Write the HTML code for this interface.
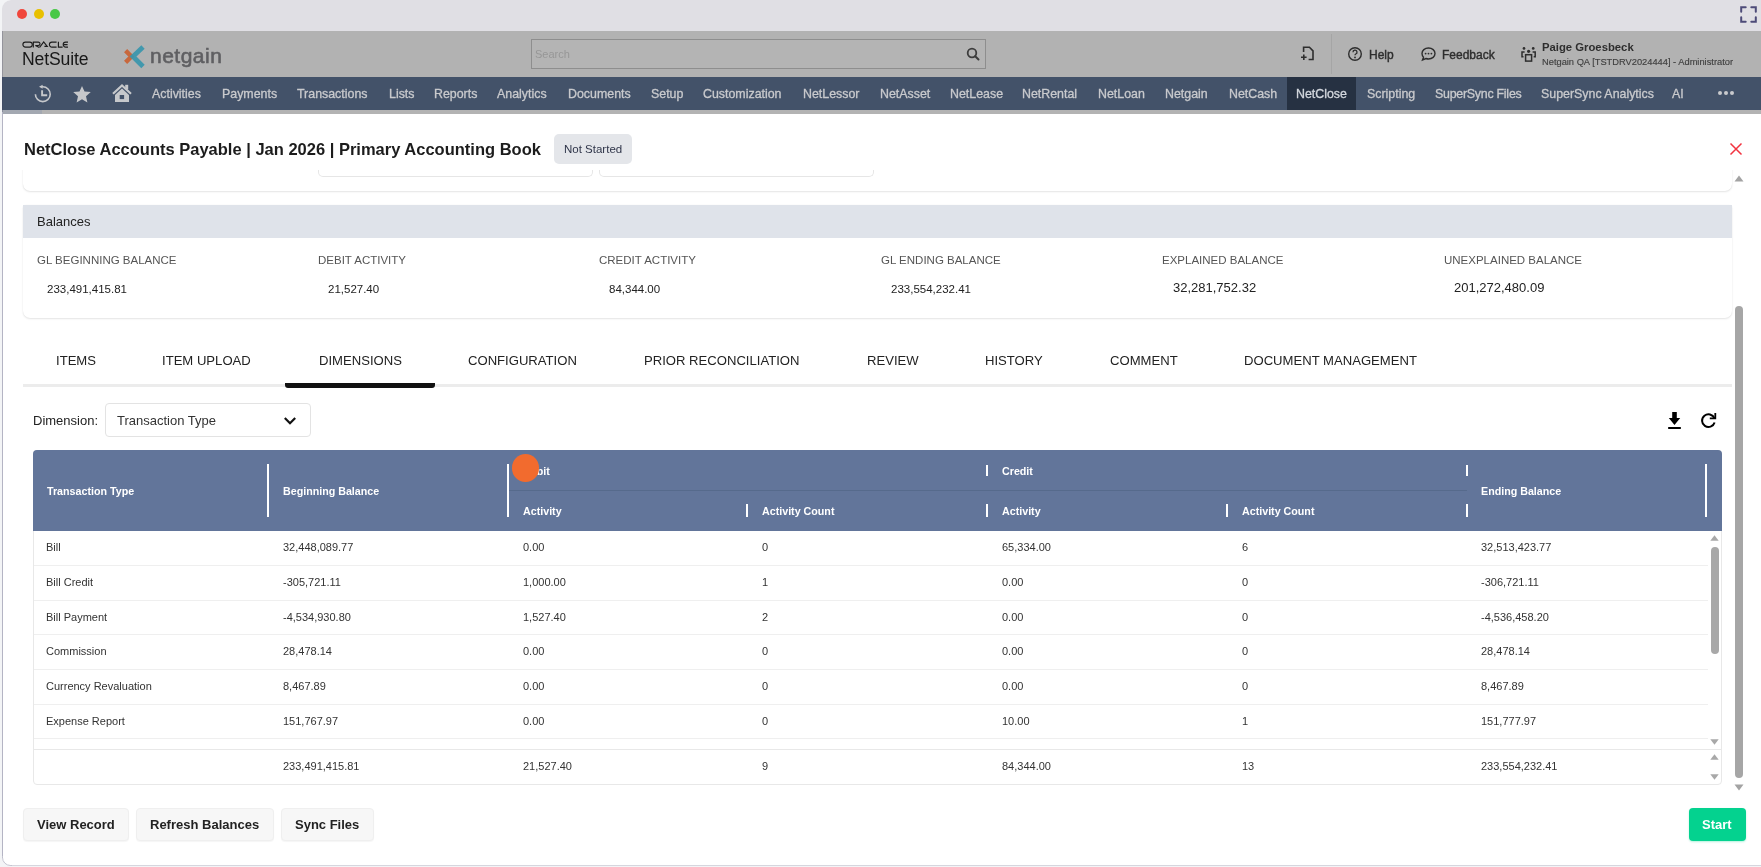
<!DOCTYPE html>
<html><head><meta charset="utf-8">
<style>
*{margin:0;padding:0;box-sizing:border-box}
html,body{width:1761px;height:867px;overflow:hidden;background:#f3f4f6;font-family:"Liberation Sans",sans-serif}
.a{position:absolute}
.t{position:absolute;line-height:1;white-space:nowrap;will-change:transform}
#win{position:absolute;left:0;top:0;width:1761px;height:867px;background:#fff;clip-path:inset(0 0 1px 2px round 9px 0 0 9px)}
#titlebar{position:absolute;left:0;top:0;width:1761px;height:31px;background:#e0dfe4}
.dot{position:absolute;top:9px;width:10px;height:10px;border-radius:50%}
#hdr{position:absolute;left:0;top:31px;width:1761px;height:46px;background:#b2b2b2}
#nav{position:absolute;left:0;top:77px;width:1761px;height:33px;background:#435269}
.nv{position:absolute;will-change:transform;top:87.9px;font-size:12.4px;color:#c9cacd;-webkit-text-stroke:0.3px #c9cacd;line-height:1}
#strip{position:absolute;left:0;top:110px;width:1761px;height:4px;background:#b3b3b3}
#modal{position:absolute;left:3px;top:114px;width:1758px;height:752px;background:#fff;border-radius:7px 0 0 8px}
.lbl{font-size:11.5px;color:#555}
.val{font-size:11.5px;color:#222}
.tab{font-size:13.1px;color:#222}
.th{font-size:10.7px;font-weight:bold;color:#fff}
.td{font-size:11px;color:#333}
.sep{position:absolute;width:2px;background:#fff}
.rl{position:absolute;left:34px;width:1674px;height:1px;background:#efefef}
.btn{position:absolute;top:808px;height:33px;background:#f7f7f7;border:1px solid #efefef;border-radius:4px;box-shadow:0 1px 1px rgba(0,0,0,0.04)}
.bt{font-size:13px;font-weight:bold;color:#222}
</style></head><body>
<div id="win">
<div id="titlebar"></div>
<div class="dot" style="left:17px;background:#f0463c"></div>
<div class="dot" style="left:34px;background:#e8c000"></div>
<div class="dot" style="left:50px;background:#48c846"></div>
<svg class="a" style="left:1740px;top:6px" width="17" height="17" viewBox="0 0 17 17"><g fill="none" stroke="#4d4b78" stroke-width="2" stroke-linecap="round"><path d="M1.2 5.7V1.2H5.7M11.3 1.2H15.8V5.7M15.8 11.3V15.8H11.3M5.7 15.8H1.2V11.3"/></g></svg>

<div id="hdr"></div>
<!-- logos -->
<svg class="a" style="left:22.3px;top:41.1px" width="47" height="7" viewBox="0 0 47 7"><g fill="none" stroke="#1d1d1d" stroke-width="1.15"><rect x="0.9" y="1.1" width="9.4" height="5" rx="2.5"/><path d="M11.3 6.4V1.1H16.3A1.7 1.7 0 0 1 16.3 4.5H13.4L17.3 6.4"/><path d="M17.6 6.4L21.7 1L25.2 5.3H22.4"/><path d="M34.6 1.1H29.9A2.5 2.5 0 0 0 29.9 6.1H34.6"/><path d="M36.4 0.8V6.1H40.6"/><path d="M46 1.1H43.7A2.5 2.5 0 0 0 43.7 6.1H46M41.9 3.6H45.6"/></g></svg>
<div class="t" style="left:21.8px;top:51.3px;font-size:17.6px;color:#181818;letter-spacing:-0.15px">NetSuite</div>
<svg class="a" style="left:122px;top:45px" width="24" height="24" viewBox="0 0 24 24">
<path d="M3.6 5.6 L9.4 11.5 L3.6 17.4" fill="none" stroke="#c8683d" stroke-width="4.4"/>
<path d="M21 2 L11 11.5 L21 21.5" fill="none" stroke="#3896ad" stroke-width="4.8" stroke-opacity="0.92"/>
</svg>
<div class="t" style="left:150px;top:44.7px;font-size:21px;color:#5f5f62;letter-spacing:0.5px;-webkit-text-stroke:0.6px #5f5f62">netgain</div>
<!-- search -->
<div class="a" style="left:531px;top:39px;width:455px;height:30px;border:1px solid #8e8e8e;border-top-width:1.5px;background:#b4b4b4"></div>
<div class="t" style="left:534.6px;top:48.6px;font-size:11px;color:#979797">Search</div>
<svg class="a" style="left:964px;top:45px" width="18" height="18" viewBox="0 0 18 18"><circle cx="8" cy="8" r="4.3" fill="none" stroke="#3d3d3d" stroke-width="1.8"/><path d="M11.2 11.2L14.5 14.5" stroke="#3d3d3d" stroke-width="2" stroke-linecap="round"/></svg>
<!-- right header -->
<svg class="a" style="left:1299px;top:46px" width="17" height="16" viewBox="0 0 17 16"><g fill="none" stroke="#2e2e2e" stroke-width="1.6"><path d="M4.6 6V1.3H10.4L14 4.9V13.5H9.6"/><path d="M2 11.2H7.6M4.8 8.4V14"/></g></svg>
<div class="a" style="left:1331px;top:34px;width:1px;height:40px;background:#a5a5a5"></div>
<svg class="a" style="left:1347px;top:46px" width="16" height="16" viewBox="0 0 16 16"><circle cx="8" cy="8" r="6.3" fill="none" stroke="#2e2e2e" stroke-width="1.4"/><path d="M6 6.2a2 2 0 1 1 2.8 1.8c-.6.3-.8.6-.8 1.3" fill="none" stroke="#2e2e2e" stroke-width="1.3"/><circle cx="8" cy="11.4" r="0.9" fill="#2e2e2e"/></svg>
<div class="t" style="left:1368.5px;top:48.9px;font-size:12px;color:#2e2e2e;-webkit-text-stroke:0.4px #2e2e2e">Help</div>
<svg class="a" style="left:1420px;top:46px" width="17" height="16" viewBox="0 0 17 16"><path d="M8.5 2C12.3 2 15 4.5 15 7.5S12.3 13 8.5 13c-.9 0-1.8-.2-2.6-.5L2.5 14l1-2.8C2.5 10.2 2 8.9 2 7.5 2 4.5 4.7 2 8.5 2z" fill="none" stroke="#2e2e2e" stroke-width="1.4"/><circle cx="5.6" cy="7.6" r="0.9" fill="#2e2e2e"/><circle cx="8.5" cy="7.6" r="0.9" fill="#2e2e2e"/><circle cx="11.4" cy="7.6" r="0.9" fill="#2e2e2e"/></svg>
<div class="t" style="left:1441.5px;top:48.9px;font-size:12px;color:#2e2e2e;-webkit-text-stroke:0.4px #2e2e2e">Feedback</div>
<svg class="a" style="left:1519px;top:46px" width="18" height="17" viewBox="0 0 18 17"><g fill="#2e2e2e"><circle cx="5" cy="2.4" r="1.35"/><circle cx="14.2" cy="2.4" r="1.35"/><circle cx="9.6" cy="5.3" r="1.6"/></g><g fill="none" stroke="#2e2e2e" stroke-width="1.5"><path d="M5.6 6H3V10.7H4.5M13.6 6H16.2V10.7H14.7"/><rect x="6.6" y="8.7" width="6" height="6.4"/></g></svg>
<div class="t" style="left:1542px;top:41.8px;font-size:11.3px;font-weight:bold;color:#2e2e2e">Paige Groesbeck</div>
<div class="t" style="left:1542px;top:58.2px;font-size:9.3px;color:#3f3f3f;-webkit-text-stroke:0.15px #3f3f3f">Netgain QA [TSTDRV2024444] - Administrator</div>

<!-- nav -->
<div id="nav"></div>
<div class="a" style="left:1286.5px;top:77px;width:69.5px;height:33px;background:#263142"></div>
<svg class="a" style="left:33px;top:84px" width="19" height="19" viewBox="0 0 19 19"><g fill="none" stroke="#c6c8cb"><path d="M2.4 10.2A7.4 7.4 0 1 0 9.8 2.8H8.8" stroke-width="1.6"/><path d="M9.1 6.3V11.3H14.2" stroke-width="1.9"/></g><path d="M9.6 0.8L6 2.8L9.6 4.8z" fill="#c6c8cb"/></svg>
<svg class="a" style="left:72px;top:84.5px" width="20" height="19" viewBox="0 0 20 19"><path d="M10 1l2.5 5.5 6.3.6-4.8 4.2 1.4 6.2L10 14.3 4.6 17.5 6 11.3 1.2 7.1l6.3-.6z" fill="#c6c8cb"/></svg>
<svg class="a" style="left:111px;top:83px" width="22" height="20" viewBox="0 0 22 20"><path d="M2 10.8L11 2.4L20 10.8" fill="none" stroke="#c6c8cb" stroke-width="2.2"/><rect x="14.2" y="1.8" width="3" height="4.5" fill="#c6c8cb"/><path d="M4 12L11 5.6L18 12V19H4z" fill="#c6c8cb"/><rect x="8.7" y="12" width="4.4" height="4.1" fill="#435269"/></svg>
<div class="nv" style="left:151.7px">Activities</div>
<div class="nv" style="left:222.4px">Payments</div>
<div class="nv" style="left:297.4px">Transactions</div>
<div class="nv" style="left:388.8px">Lists</div>
<div class="nv" style="left:433.7px">Reports</div>
<div class="nv" style="left:497.2px">Analytics</div>
<div class="nv" style="left:567.7px">Documents</div>
<div class="nv" style="left:650.9px">Setup</div>
<div class="nv" style="left:703px">Customization</div>
<div class="nv" style="left:803.4px">NetLessor</div>
<div class="nv" style="left:879.5px">NetAsset</div>
<div class="nv" style="left:950px">NetLease</div>
<div class="nv" style="left:1022px">NetRental</div>
<div class="nv" style="left:1098px">NetLoan</div>
<div class="nv" style="left:1165px">Netgain</div>
<div class="nv" style="left:1229.2px">NetCash</div>
<div class="nv" style="left:1295.8px;color:#d4d8de;-webkit-text-stroke-color:#d4d8de">NetClose</div>
<div class="nv" style="left:1366.6px">Scripting</div>
<div class="nv" style="left:1435px;letter-spacing:-0.25px">SuperSync Files</div>
<div class="nv" style="left:1541.2px">SuperSync Analytics</div>
<div class="nv" style="left:1672.2px">AI</div>
<div class="a" style="left:1718.2px;top:91.3px;width:4.2px;height:4.2px;border-radius:50%;background:#c9cacd"></div>
<div class="a" style="left:1723.9px;top:91.3px;width:4.2px;height:4.2px;border-radius:50%;background:#c9cacd"></div>
<div class="a" style="left:1729.6px;top:91.3px;width:4.2px;height:4.2px;border-radius:50%;background:#c9cacd"></div>
<div id="strip"></div>
<div class="a" style="left:0;top:110px;width:42px;height:4px;background:#a3a8b1"></div>

<!-- modal -->
<div id="modal"></div>

<!-- modal header -->
<!-- scrolled card remnant -->
<div class="a" style="left:23px;top:140px;width:1709px;height:51px;border-radius:0 0 7px 7px;box-shadow:0 1px 2px rgba(0,0,0,0.10),0 0 1px rgba(0,0,0,0.10);background:#fff"></div>
<div class="a" style="left:318px;top:160px;width:275px;height:17px;border:1px solid #e6e6e6;border-top:none;border-radius:0 0 5px 5px"></div>
<div class="a" style="left:599px;top:160px;width:275px;height:17px;border:1px solid #e6e6e6;border-top:none;border-radius:0 0 5px 5px"></div>
<div class="a" style="left:4px;top:114px;width:1731px;height:56px;background:#fff;border-radius:7px 0 0 0"></div>
<div class="t" style="left:23.5px;top:141.2px;font-size:16.5px;font-weight:bold;color:#1c1c1c">NetClose Accounts Payable | Jan 2026 | Primary Accounting Book</div>
<div class="a" style="left:554px;top:134px;width:78px;height:30px;background:#e4e6ea;border-radius:5px"></div>
<div class="t" style="left:563.7px;top:144.1px;font-size:11.5px;color:#30364a">Not Started</div>
<svg class="a" style="left:1729px;top:141.8px" width="14" height="14" viewBox="0 0 14 14"><path d="M1.5 1.5L12.5 12.5M12.5 1.5L1.5 12.5" stroke="#f2333f" stroke-width="1.5"/></svg>

<!-- outer scrollbar -->
<svg class="a" style="left:1734px;top:175px" width="10" height="7" viewBox="0 0 10 7"><path d="M0.5 6.5L5 0.5L9.5 6.5z" fill="#a3a3a3"/></svg>
<div class="a" style="left:1734.5px;top:306px;width:8.5px;height:472.3px;background:#a6a6a6;border-radius:4px"></div>
<svg class="a" style="left:1734px;top:784px" width="10" height="7" viewBox="0 0 10 7"><path d="M0.5 0.5L5 6.5L9.5 0.5z" fill="#a3a3a3"/></svg>

<!-- balances card -->
<div class="a" style="left:23px;top:205px;width:1709px;height:113px;border-radius:3px 3px 7px 7px;box-shadow:0 1px 2px rgba(0,0,0,0.10),0 0 1px rgba(0,0,0,0.08);background:#fff"></div>
<div class="a" style="left:23px;top:205px;width:1709px;height:33px;background:#dfe3ea"></div>
<div class="t" style="left:36.7px;top:214.7px;font-size:13px;color:#222">Balances</div>
<div class="t lbl" style="left:36.5px;top:254.6px">GL BEGINNING BALANCE</div>
<div class="t lbl" style="left:318px;top:254.6px">DEBIT ACTIVITY</div>
<div class="t lbl" style="left:599.4px;top:254.6px">CREDIT ACTIVITY</div>
<div class="t lbl" style="left:880.8px;top:254.6px">GL ENDING BALANCE</div>
<div class="t lbl" style="left:1162.3px;top:254.6px">EXPLAINED BALANCE</div>
<div class="t lbl" style="left:1443.9px;top:254.6px">UNEXPLAINED BALANCE</div>
<div class="t val" style="left:46.7px;top:283.5px">233,491,415.81</div>
<div class="t val" style="left:327.9px;top:283.5px">21,527.40</div>
<div class="t val" style="left:608.9px;top:283.5px">84,344.00</div>
<div class="t val" style="left:890.8px;top:283.5px">233,554,232.41</div>
<div class="t" style="left:1172.5px;top:281.4px;font-size:13px;color:#222">32,281,752.32</div>
<div class="t" style="left:1453.6px;top:281.4px;font-size:13px;color:#222">201,272,480.09</div>

<!-- tabs -->
<div class="a" style="left:23px;top:384px;width:1709px;height:3px;background:#ececec"></div>
<div class="a" style="left:285px;top:383px;width:150px;height:4.5px;background:#111;border-radius:0 0 3px 3px"></div>
<div class="t tab" style="left:56.2px;top:354.2px">ITEMS</div>
<div class="t tab" style="left:162.4px;top:354.2px">ITEM UPLOAD</div>
<div class="t tab" style="left:318.6px;top:354.2px">DIMENSIONS</div>
<div class="t tab" style="left:468.1px;top:354.2px">CONFIGURATION</div>
<div class="t tab" style="left:643.6px;top:354.2px">PRIOR RECONCILIATION</div>
<div class="t tab" style="left:866.9px;top:354.2px">REVIEW</div>
<div class="t tab" style="left:985px;top:354.2px">HISTORY</div>
<div class="t tab" style="left:1110px;top:354.2px">COMMENT</div>
<div class="t tab" style="left:1244.4px;top:354.2px">DOCUMENT MANAGEMENT</div>

<!-- dimension -->
<div class="t" style="left:33.2px;top:414.3px;font-size:13px;color:#222">Dimension:</div>
<div class="a" style="left:105px;top:403px;width:206px;height:34px;border:1px solid #e3e3e3;border-radius:4px"></div>
<div class="t" style="left:116.5px;top:414.3px;font-size:13px;color:#333">Transaction Type</div>
<svg class="a" style="left:283px;top:416px" width="14" height="10" viewBox="0 0 14 10"><path d="M1.8 2L7 7.2L12.2 2" fill="none" stroke="#111" stroke-width="2.2"/></svg>
<svg class="a" style="left:1667px;top:411px" width="16" height="19" viewBox="0 0 16 19"><path d="M5.2 1H9.8V7H13.2L7.5 14L1.8 7H5.2z" fill="#000"/><rect x="1" y="16" width="13" height="2" rx="0.8" fill="#000"/></svg>
<svg class="a" style="left:1699px;top:411px" width="19" height="19" viewBox="0 0 19 19"><path d="M15.4 7.2A6.4 6.4 0 1 0 15.6 11.5" fill="none" stroke="#000" stroke-width="2"/><path d="M16.3 1.9V7.4H10.8" fill="none" stroke="#000" stroke-width="1.8" stroke-linejoin="miter"/></svg>

<!-- table -->
<div class="a" style="left:33px;top:450px;width:1689px;height:335px;border:1px solid #e8e8e8;border-radius:4px;background:#fff"></div>
<div class="a" style="left:33px;top:450px;width:1689px;height:80.5px;background:#62759a;border-radius:4px 4px 0 0"></div>
<div class="a" style="left:509px;top:490px;width:958px;height:1px;background:#566a8c"></div>
<div class="sep" style="left:267px;top:463.5px;height:53px"></div>
<div class="sep" style="left:507px;top:463.5px;height:53px"></div>
<div class="sep" style="left:746px;top:504px;height:12.5px"></div>
<div class="sep" style="left:986px;top:464.5px;height:11.5px"></div>
<div class="sep" style="left:986px;top:504px;height:12.5px"></div>
<div class="sep" style="left:1225.5px;top:504px;height:12.5px"></div>
<div class="sep" style="left:1465.5px;top:464.5px;height:11.5px"></div>
<div class="sep" style="left:1465.5px;top:504px;height:12.5px"></div>
<div class="sep" style="left:1705px;top:463.5px;height:53px"></div>
<div class="t th" style="left:46.9px;top:486px">Transaction Type</div>
<div class="t th" style="left:283.4px;top:486px">Beginning Balance</div>
<div class="t th" style="left:522.6px;top:466px">Debit</div>
<div class="t th" style="left:522.6px;top:506px">Activity</div>
<div class="t th" style="left:762.4px;top:506px">Activity Count</div>
<div class="t th" style="left:1002.2px;top:466px">Credit</div>
<div class="t th" style="left:1002.2px;top:506px">Activity</div>
<div class="t th" style="left:1241.7px;top:506px">Activity Count</div>
<div class="t th" style="left:1481.4px;top:486px">Ending Balance</div>
<div class="a" style="left:511.8px;top:454px;width:27.6px;height:27.6px;border-radius:50%;background:#f26b2e"></div>
<div class="t td" style="left:46.0px;top:542.1px">Bill</div>
<div class="t td" style="left:283.4px;top:542.1px">32,448,089.77</div>
<div class="t td" style="left:522.6px;top:542.1px">0.00</div>
<div class="t td" style="left:762.4px;top:542.1px">0</div>
<div class="t td" style="left:1002.2px;top:542.1px">65,334.00</div>
<div class="t td" style="left:1241.7px;top:542.1px">6</div>
<div class="t td" style="left:1481.4px;top:542.1px">32,513,423.77</div>
<div class="rl" style="top:564.9px"></div>
<div class="t td" style="left:46.0px;top:576.8px">Bill Credit</div>
<div class="t td" style="left:283.4px;top:576.8px">-305,721.11</div>
<div class="t td" style="left:522.6px;top:576.8px">1,000.00</div>
<div class="t td" style="left:762.4px;top:576.8px">1</div>
<div class="t td" style="left:1002.2px;top:576.8px">0.00</div>
<div class="t td" style="left:1241.7px;top:576.8px">0</div>
<div class="t td" style="left:1481.4px;top:576.8px">-306,721.11</div>
<div class="rl" style="top:599.6px"></div>
<div class="t td" style="left:46.0px;top:611.6px">Bill Payment</div>
<div class="t td" style="left:283.4px;top:611.6px">-4,534,930.80</div>
<div class="t td" style="left:522.6px;top:611.6px">1,527.40</div>
<div class="t td" style="left:762.4px;top:611.6px">2</div>
<div class="t td" style="left:1002.2px;top:611.6px">0.00</div>
<div class="t td" style="left:1241.7px;top:611.6px">0</div>
<div class="t td" style="left:1481.4px;top:611.6px">-4,536,458.20</div>
<div class="rl" style="top:634.4px"></div>
<div class="t td" style="left:46.0px;top:646.4px">Commission</div>
<div class="t td" style="left:283.4px;top:646.4px">28,478.14</div>
<div class="t td" style="left:522.6px;top:646.4px">0.00</div>
<div class="t td" style="left:762.4px;top:646.4px">0</div>
<div class="t td" style="left:1002.2px;top:646.4px">0.00</div>
<div class="t td" style="left:1241.7px;top:646.4px">0</div>
<div class="t td" style="left:1481.4px;top:646.4px">28,478.14</div>
<div class="rl" style="top:669.1px"></div>
<div class="t td" style="left:46.0px;top:681.1px">Currency Revaluation</div>
<div class="t td" style="left:283.4px;top:681.1px">8,467.89</div>
<div class="t td" style="left:522.6px;top:681.1px">0.00</div>
<div class="t td" style="left:762.4px;top:681.1px">0</div>
<div class="t td" style="left:1002.2px;top:681.1px">0.00</div>
<div class="t td" style="left:1241.7px;top:681.1px">0</div>
<div class="t td" style="left:1481.4px;top:681.1px">8,467.89</div>
<div class="rl" style="top:703.9px"></div>
<div class="t td" style="left:46.0px;top:715.9px">Expense Report</div>
<div class="t td" style="left:283.4px;top:715.9px">151,767.97</div>
<div class="t td" style="left:522.6px;top:715.9px">0.00</div>
<div class="t td" style="left:762.4px;top:715.9px">0</div>
<div class="t td" style="left:1002.2px;top:715.9px">10.00</div>
<div class="t td" style="left:1241.7px;top:715.9px">1</div>
<div class="t td" style="left:1481.4px;top:715.9px">151,777.97</div>
<div class="rl" style="top:738px"></div>
<div class="a" style="left:34px;top:749px;width:1687px;height:1px;background:#e8e8e8"></div>
<div class="t td" style="left:283.4px;top:761.3px">233,491,415.81</div>
<div class="t td" style="left:522.6px;top:761.3px">21,527.40</div>
<div class="t td" style="left:762.4px;top:761.3px">9</div>
<div class="t td" style="left:1002.2px;top:761.3px">84,344.00</div>
<div class="t td" style="left:1241.7px;top:761.3px">13</div>
<div class="t td" style="left:1481.4px;top:761.3px">233,554,232.41</div>
<!-- inner scrollbars -->
<svg class="a" style="left:1710px;top:535px" width="9" height="6" viewBox="0 0 9 6"><path d="M0.3 5.8L4.5 0.3L8.7 5.8z" fill="#a8a8a8"/></svg>
<div class="a" style="left:1710.5px;top:547px;width:8.5px;height:106.5px;background:#a8a8a8;border-radius:4.2px"></div>
<svg class="a" style="left:1710px;top:739px" width="9" height="6" viewBox="0 0 9 6"><path d="M0.3 0.2L4.5 5.7L8.7 0.2z" fill="#a8a8a8"/></svg>
<svg class="a" style="left:1710px;top:753.8px" width="9" height="6" viewBox="0 0 9 6"><path d="M0.3 5.8L4.5 0.3L8.7 5.8z" fill="#a8a8a8"/></svg>
<svg class="a" style="left:1710px;top:774px" width="9" height="6" viewBox="0 0 9 6"><path d="M0.3 0.2L4.5 5.7L8.7 0.2z" fill="#a8a8a8"/></svg>

<!-- buttons -->
<div class="btn" style="left:23px;width:106px"></div>
<div class="btn" style="left:136px;width:138px"></div>
<div class="btn" style="left:280.5px;width:93px"></div>
<div class="t bt" style="left:36.9px;top:818px">View Record</div>
<div class="t bt" style="left:149.8px;top:818px">Refresh Balances</div>
<div class="t bt" style="left:294.6px;top:818px">Sync Files</div>
<div class="a" style="left:1688.5px;top:808px;width:57px;height:33px;background:#04d28f;border-radius:4px;box-shadow:0 1px 2px rgba(4,210,143,0.3)"></div>
<div class="t bt" style="left:1702.4px;top:818px;color:#fff">Start</div>

</div>
<div class="a" style="left:2px;top:112px;width:1px;height:746px;background:#b4b4c4"></div>
<div class="a" style="left:2px;top:31px;width:1px;height:81px;background:rgba(60,60,90,0.25)"></div>
<div class="a" style="left:10px;top:865px;width:1751px;height:1px;background:#d6d6de"></div>
<svg class="a" style="left:2px;top:856px" width="10" height="10" viewBox="0 0 10 10"><path d="M0.5 0V1.5A8 8 0 0 0 8.5 9.5H10" fill="none" stroke="#c4c4d0" stroke-width="1"/></svg>
</body></html>
